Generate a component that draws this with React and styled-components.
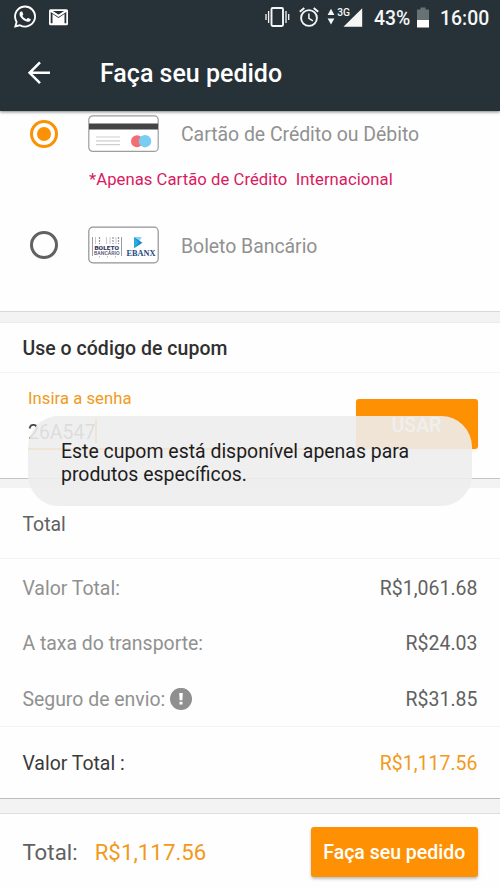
import React from "react";
import styled, { createGlobalStyle } from "styled-components";

const GlobalStyle = createGlobalStyle`
  * { box-sizing: border-box; }
  body {
    margin: 0;
    background: #fefefe;
    font-family: Roboto, "Liberation Sans", sans-serif;
    font-size: 19.44px;
  }
`;

const Screen = styled.div`
  position: relative;
  width: 500px;
  height: 889px;
  overflow: hidden;
  display: flex;
  flex-direction: column;
  background: #fefefe;
`;

const TopBars = styled.header`
  flex: none;
  height: 111px;
  background: #273238;
  color: #fff;
  box-shadow: 0 1px 3px rgba(0, 0, 0, 0.5);
  z-index: 1;
`;

const StatusBar = styled.div`
  height: 34px;
  display: flex;
  justify-content: space-between;
  padding: 0 11px 0 13px;
`;

const StatusGroup = styled.div`
  display: flex;
  align-items: center;
  font-weight: 500;
  color: #f5f7f7;
`;

const StatusText = styled.span`
  width: ${(p) => p.$width}px;
  margin-left: ${(p) => p.$gap}px;
  white-space: nowrap;
  font-size: 19.4px;
  padding-top: 2px;
`;

const Icon = styled.svg`
  display: block;
  flex: none;
  margin-left: ${(p) => p.$gap || 0}px;
`;

const AppBar = styled.div`
  height: 77px;
  display: flex;
  align-items: center;
  padding-left: 27px;
`;

const Title = styled.h1`
  margin: 1px 0 0 49px;
  font-size: 25px;
  font-weight: 500;
`;

const Payments = styled.section`
  flex: none;
  height: 201px;
  border-bottom: 1px solid #d8d8d8;
`;

const PaymentRow = styled.div`
  height: ${(p) => p.$height}px;
  display: flex;
  align-items: center;
  padding-left: 30px;
  color: #919191;
`;

const Radio = styled.span`
  width: 28px;
  height: 28px;
  border-radius: 50%;
  border: 3px solid ${(p) => (p.$checked ? "#fb9204" : "#616161")};
  display: flex;
  align-items: center;
  justify-content: center;

  &::after {
    content: "";
    width: 14px;
    height: 14px;
    border-radius: 50%;
    background: ${(p) => (p.$checked ? "#fb9204" : "transparent")};
  }
`;

const PaymentLabel = styled.span`
  margin-left: 22px;
  padding-top: ${(p) => p.$drop || 1}px;
  letter-spacing: -0.03px;
`;

const Notice = styled.p`
  margin: 0 0 0 89px;
  height: 46px;
  line-height: 48px;
  font-size: 16.67px;
  letter-spacing: 0.05px;
  white-space: pre;
  color: #d81b60;
`;

const Gap = styled.div`
  flex: none;
  height: ${(p) => p.$height}px;
  background: #f3f3f3;
  border-bottom: 1px solid ${(p) => p.$line || "#ebebeb"};
`;

const CardHeading = styled.h2`
  flex: none;
  margin: 0;
  height: ${(p) => p.$height}px;
  display: flex;
  align-items: center;
  padding: 2px 0 0 22.4px;
  border-bottom: 1px solid #f3f3f3;
  font-size: 19.44px;
  font-weight: ${(p) => (p.$strong ? 500 : 400)};
  letter-spacing: ${(p) => (p.$strong ? 0.06 : 0)}px;
  color: ${(p) => (p.$strong ? "#303030" : "#616161")};
`;

const CouponForm = styled.div`
  flex: none;
  height: 106px;
  display: flex;
  justify-content: space-between;
  padding: 0 22.5px 0 28px;
  border-bottom: 1px solid #c4c4c4;
`;

const Field = styled.div`
  width: 305px;
  height: 77px;
  padding-top: 16px;
  border-bottom: 2px solid #fb9204;
`;

const FieldLabel = styled.div`
  font-size: 16.67px;
  line-height: 20px;
  letter-spacing: 0.04px;
  color: #f19a1b;
`;

const FieldValue = styled.div`
  display: inline-block;
  margin-top: 10px;
  height: 24px;
  line-height: 28px;
  border-right: 2px solid #fb9204;
  color: #424242;
`;

const Button = styled.button`
  width: ${(p) => p.$width}px;
  height: 50px;
  margin: ${(p) => p.$top || 0}px 0 0;
  padding: ${(p) => p.$drop || 0}px 0 0;
  border: 0;
  border-radius: 3px;
  background: #fe9103;
  color: #fff;
  font: 500 19.5px Roboto, "Liberation Sans", sans-serif;
  white-space: nowrap;
  box-shadow: 0 2px 3px rgba(0, 0, 0, ${(p) => p.$shadow});
`;

const Rows = styled.section`
  flex: none;
  height: 168px;
  padding-top: 1px;
  border-bottom: 1px solid #f3f3f3;
`;

const PriceRow = styled.div`
  height: ${(p) => p.$height || 55.5}px;
  flex: none;
  display: flex;
  align-items: center;
  justify-content: space-between;
  padding: 1px 22.5px 0 22.4px;
  color: ${(p) => p.$label || "#919191"};
`;

const RowLabel = styled.span`
  display: flex;
  align-items: center;
`;

const Price = styled.span`
  letter-spacing: 0.04px;
  color: ${(p) => (p.$accent ? "#f19a1b" : "#616161")};
`;

const GrandTotal = styled.section`
  flex: none;
  height: 72px;
  border-bottom: 1px solid #bdbdbd;
`;

const Footer = styled.footer`
  flex: 1;
  display: flex;
  align-items: center;
  justify-content: space-between;
  padding: 0 22.5px 0 22.4px;
`;

const FooterTotal = styled.div`
  display: flex;
  gap: 17px;
  padding-top: 1px;
  font-size: 22.22px;
  letter-spacing: 0.04px;
  color: #616161;
`;

const Toast = styled.div`
  position: absolute;
  left: 28px;
  top: 416px;
  width: 444px;
  height: 90px;
  z-index: 2;
  padding: 24px 33px 0;
  border-radius: 31px;
  background: rgba(237, 237, 237, 0.9);
  color: #1d1d1d;
  font-size: 19.44px;
  line-height: 23px;
  white-space: pre-line;
`;

function WhatsAppIcon() {
  return (
    <Icon width="24" height="24" viewBox="0 0 24 24" fill="#fff">
      <path transform="translate(1 .6) scale(.92)" d="M17.5 14.4c-.3-.15-1.76-.87-2.03-.97-.27-.1-.47-.15-.67.15-.2.3-.77.97-.94 1.16-.17.2-.35.22-.65.08-.3-.15-1.25-.46-2.39-1.48-.88-.79-1.48-1.76-1.65-2.06-.17-.3-.02-.46.13-.6.13-.14.3-.35.45-.52.15-.18.2-.3.3-.5.1-.2.05-.37-.03-.52-.07-.15-.67-1.61-.91-2.21-.25-.58-.49-.5-.67-.51h-.57c-.2 0-.52.07-.8.37-.27.3-1.04 1.02-1.04 2.48s1.07 2.88 1.21 3.07c.15.2 2.1 3.2 5.08 4.49.71.31 1.26.49 1.69.63.71.22 1.36.19 1.87.12.57-.09 1.76-.72 2.01-1.42.25-.69.25-1.29.17-1.41-.07-.13-.27-.2-.56-.35M12.05 21.8a9.9 9.9 0 0 1-5.03-1.38l-.36-.21-3.74.98 1-3.65-.24-.37a9.86 9.86 0 0 1-1.51-5.26c0-5.45 4.44-9.89 9.89-9.89a9.88 9.88 0 0 1 9.88 9.9c0 5.45-4.44 9.88-9.89 9.88m8.42-18.3A11.8 11.8 0 0 0 12.05 0C5.5 0 .16 5.34.16 11.9c0 2.1.55 4.14 1.59 5.94L.06 24l6.3-1.65a11.9 11.9 0 0 0 5.69 1.45c6.55 0 11.89-5.34 11.89-11.9a11.8 11.8 0 0 0-3.48-8.4" />
    </Icon>
  );
}

function MailIcon() {
  return (
    <Icon $gap={12} width="19" height="17" viewBox="0 0 19 17">
      <rect width="19" height="16" y=".2" rx="1.5" fill="#fff" />
      <path d="M2.6 14.2V3.2L9.5 8l6.9-4.8v11" fill="none" stroke="#273238" strokeWidth="1.8" />
      <path d="M3 2h13L9.5 6z" fill="#273238" />
      <path d="M1.4 1.6l8.1 5.2 8.1-5.2" fill="none" stroke="#fff" strokeWidth="1.9" />
    </Icon>
  );
}

function VibrateIcon() {
  return (
    <Icon width="25" height="20" viewBox="0 0 25 20" fill="none" stroke="#f5f7f7">
      <rect x="6.5" y="1" width="11.5" height="18" rx="1.2" strokeWidth="1.9" />
      <path d="M3.6 4v12M21 4v12" strokeWidth="1.3" />
      <path d="M1 7v6M23.7 7v6" strokeWidth="1.3" />
    </Icon>
  );
}

function AlarmIcon() {
  return (
    <Icon $gap={9} width="20" height="20" viewBox="0 0 20 20" fill="none" stroke="#f5f7f7">
      <circle cx="10" cy="11" r="7.9" strokeWidth="1.9" />
      <path d="M.8 4.8L5.3 1M19.2 4.8L14.7 1" strokeWidth="1.9" />
      <path d="M9.9 6.4v5l4 2.5" strokeWidth="1.5" />
    </Icon>
  );
}

function SignalIcon() {
  return (
    <Icon $gap={8} width="36" height="22" viewBox="0 0 36 22" fill="#f5f7f7">
      <path d="M4 2.8l3.4 6.2H.6zM4 18.6L.6 12.4h6.8z" />
      <path d="M35.2 2.2v18.5H16.5z" />
      <text x="10.3" y="10" fontSize="11.5" fontWeight="500" textLength="12.8" lengthAdjust="spacingAndGlyphs" fontFamily="Roboto, sans-serif" stroke="#273238" strokeWidth="2" paintOrder="stroke">3G</text>
    </Icon>
  );
}

function BatteryIcon() {
  return (
    <Icon $gap={7} width="12" height="21" viewBox="0 0 12 21">
      <path d="M0 2.5h3.5V.5h5v2H12V13H0z" fill="#687175" />
      <path d="M0 13h12v7.5H0z" fill="#fff" />
    </Icon>
  );
}

function BackIcon() {
  return (
    <Icon width="24" height="24" viewBox="0 0 24 24" fill="none" stroke="#fff" strokeWidth="2.5">
      <path d="M23 11.8H3M13 1.4L2.6 11.8 13 22.2" />
    </Icon>
  );
}

function CardIcon() {
  return (
    <Icon $gap={30} width="71" height="38" viewBox="0 0 71 38">
      <rect x=".8" y=".8" width="69.4" height="35.6" rx="4" fill="#fff" stroke="#9d9d9d" strokeWidth="1.2" />
      <path d="M1 8.4h69v6H1z" fill="#444" />
      <path d="M8 22h24M8 25.8h24M8 29.6h24" stroke="#cfcfcf" strokeWidth="1.2" />
      <circle cx="49" cy="26.2" r="6" fill="#f26e70" />
      <circle cx="57" cy="26.2" r="6.2" fill="#79cdf3" />
    </Icon>
  );
}

function BoletoIcon() {
  return (
    <Icon $gap={30} width="71" height="38" viewBox="0 0 71 38">
      <rect x=".8" y="1.2" width="69.4" height="35.6" rx="4" fill="#fff" stroke="#929298" strokeWidth="1.2" />
      <path d="M4.5 11v19M33.5 11v19" stroke="#9c9ca6" strokeWidth="1" />
      <path d="M7.5 11v7M18.5 11v7M22 11v7M28 11v7" stroke="#c8c8d0" strokeWidth="1" />
      <path d="M11.5 11v7M25 11v7M30.5 11v7" stroke="#92929e" strokeWidth="1.2" strokeDasharray="2 1" />
      <text x="6.4" y="24" fontSize="6" fontWeight="900" textLength="24.6" lengthAdjust="spacingAndGlyphs" fontFamily="Roboto, sans-serif" fill="#35355b">BOLETO</text>
      <text x="6" y="29" fontSize="5" fontWeight="500" textLength="25.5" lengthAdjust="spacingAndGlyphs" fontFamily="Roboto, sans-serif" fill="#4d4d6b">BANCÁRIO</text>
      <path d="M11 30.8h1M19 30.8h1M27 30.8h1" stroke="#9c9ca6" />
      <path d="M46 11h8l-8 11z" fill="#8bd2f0" />
      <path d="M46 11.3l8.5 5.4-8.5 5.6z" fill="#168ac9" />
      <path d="M46 11.3l5 5.4-5 5.6z" fill="#29abe2" />
      <text x="38.5" y="30.2" fontSize="9" fontWeight="700" textLength="29" lengthAdjust="spacingAndGlyphs" fontFamily="Liberation Serif, serif" fill="#24477b">EBANX</text>
    </Icon>
  );
}

function AlertIcon() {
  return (
    <Icon $gap={5} width="22" height="22" viewBox="0 0 22 22">
      <circle cx="11" cy="10.4" r="10.4" fill="#8f8f8f" />
      <circle cx="11" cy="11" r="11" fill="#8f8f8f" />
      <path d="M9.2 5h3.6l-.4 7.2H9.6zM9.5 13.8h3v2.8h-3z" fill="#fff" />
    </Icon>
  );
}

export default function App() {
  return (
    <>
      <GlobalStyle />
      <Screen>
        <TopBars>
          <StatusBar>
            <StatusGroup>
              <WhatsAppIcon />
              <MailIcon />
            </StatusGroup>
            <StatusGroup>
              <VibrateIcon />
              <AlarmIcon />
              <SignalIcon />
              <StatusText $width={36} $gap={11}>43%</StatusText>
              <BatteryIcon />
              <StatusText $width={49} $gap={11}>16:00</StatusText>
            </StatusGroup>
          </StatusBar>
          <AppBar>
            <BackIcon />
            <Title>Faça seu pedido</Title>
          </AppBar>
        </TopBars>

        <Payments>
          <PaymentRow $height={45}>
            <Radio $checked />
            <CardIcon />
            <PaymentLabel>Cartão de Crédito ou Débito</PaymentLabel>
          </PaymentRow>
          <Notice>*Apenas Cartão de Crédito  Internacional</Notice>
          <PaymentRow $height={86}>
            <Radio />
            <BoletoIcon />
            <PaymentLabel $drop={2}>Boleto Bancário</PaymentLabel>
          </PaymentRow>
        </Payments>

        <Gap $height={11} />
        <CardHeading $strong $height={50}>Use o código de cupom</CardHeading>
        <CouponForm>
          <Field>
            <FieldLabel>Insira a senha</FieldLabel>
            <FieldValue>26A547</FieldValue>
          </Field>
          <Button $width={122} $top={26} $drop={2} $shadow={0.06}>USAR</Button>
        </CouponForm>

        <Gap $height={9} $line="#f3f3f3" />
        <CardHeading $height={71}>Total</CardHeading>
        <Rows>
          <PriceRow>
            <RowLabel>Valor Total:</RowLabel>
            <Price>R$1,061.68</Price>
          </PriceRow>
          <PriceRow>
            <RowLabel>A taxa do transporte:</RowLabel>
            <Price>R$24.03</Price>
          </PriceRow>
          <PriceRow>
            <RowLabel>
              Seguro de envio:
              <AlertIcon />
            </RowLabel>
            <Price>R$31.85</Price>
          </PriceRow>
        </Rows>
        <GrandTotal>
          <PriceRow $height={72} $label="#3a3a3a">
            <RowLabel>Valor Total :</RowLabel>
            <Price $accent>R$1,117.56</Price>
          </PriceRow>
        </GrandTotal>

        <Gap $height={15} $line="#dedede" />
        <Footer>
          <FooterTotal>
            <span>Total:</span>
            <Price $accent>R$1,117.56</Price>
          </FooterTotal>
          <Button $width={166.5} $drop={1} $shadow={0.25}>Faça seu pedido</Button>
        </Footer>

        <Toast>{"Este cupom está disponível apenas para\nprodutos específicos."}</Toast>
      </Screen>
    </>
  );
}
